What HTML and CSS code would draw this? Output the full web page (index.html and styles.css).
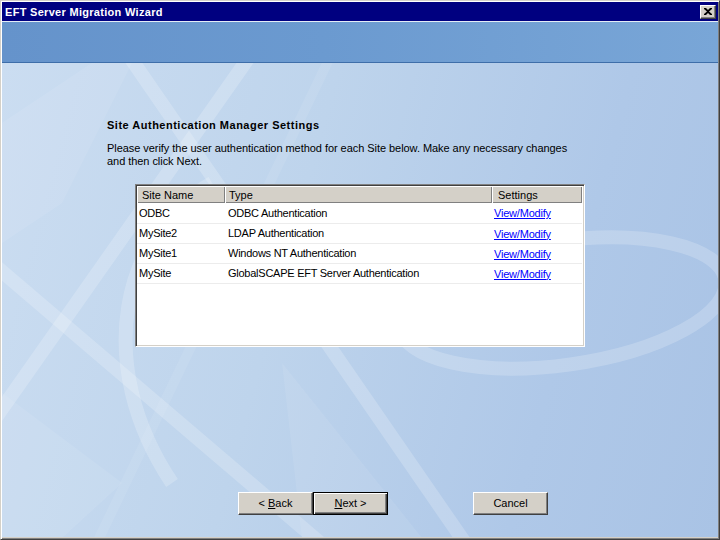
FILE: index.html
```html
<!DOCTYPE html>
<html>
<head>
<meta charset="utf-8">
<title>EFT Server Migration Wizard</title>
<link rel="stylesheet" href="styles.css">
</head>
<body>
<div class="window">
  <div class="titlebar">
    <span class="title">EFT Server Migration Wizard</span>
    <span class="close-btn">
      <svg width="8" height="7" viewBox="0 0 8 7"><path d="M0 0h2l2 2 2-2h2v1L5 3.5 8 6v1H6L4 5 2 7H0V6l3-2.5L0 1z" fill="#000"/></svg>
    </span>
  </div>
  <div class="banner"></div>
  <div class="body">
    <svg class="bg-art" width="716" height="475" viewBox="0 0 716 475">
      <g fill="#ffffff" fill-opacity="0.08">
        <polygon points="0,60 90,0 130,0 60,140 0,180"/>
        <polygon points="0,330 120,420 60,475 0,475"/>
        <polygon points="280,300 420,475 300,475"/>
      </g>
      <g fill="none" stroke="#ffffff" stroke-opacity="0.2" stroke-width="14">
        <line x1="125" y1="-10" x2="470" y2="490"/>
        <line x1="250" y1="-10" x2="-10" y2="360"/>
        <line x1="-10" y1="200" x2="330" y2="490"/>
        <path d="M210 120 C 120 170, 90 300, 170 420"/>
        <ellipse cx="560" cy="240" rx="165" ry="62" transform="rotate(-8 560 240)"/>
      </g>
      <g fill="none" stroke="#ffffff" stroke-opacity="0.08" stroke-width="10">
        <line x1="330" y1="-10" x2="90" y2="490"/>
      </g>
    </svg>
    <div class="content">
      <h1 class="heading">Site Authentication Manager Settings</h1>
      <p class="intro">Please verify the user authentication method for each Site below. Make any necessary changes<br>and then click Next.</p>
      <div class="listview">
        <table class="sites">
          <colgroup>
            <col class="c-name"><col class="c-type"><col class="c-set">
          </colgroup>
          <thead>
            <tr><th>Site Name</th><th>Type</th><th>Settings</th></tr>
          </thead>
          <tbody>
            <tr><td>ODBC</td><td>ODBC Authentication</td><td><a href="#">View/Modify</a></td></tr>
            <tr><td>MySite2</td><td>LDAP Authentication</td><td><a href="#">View/Modify</a></td></tr>
            <tr><td>MySite1</td><td>Windows NT Authentication</td><td><a href="#">View/Modify</a></td></tr>
            <tr><td>MySite</td><td>GlobalSCAPE EFT Server Authentication</td><td><a href="#">View/Modify</a></td></tr>
          </tbody>
        </table>
      </div>
    </div>
    <div class="buttons">
      <button class="btn">&lt; <u>B</u>ack</button>
      <button class="btn btn-default"><u>N</u>ext &gt;</button>
      <button class="btn btn-cancel">Cancel</button>
    </div>
  </div>
</div>
</body>
</html>
```
FILE: styles.css
```css
* { box-sizing: border-box; }
html, body { margin: 0; padding: 0; }
body {
  width: 720px;
  height: 540px;
  overflow: hidden;
  font-family: "Liberation Sans", Arial, sans-serif;
  font-size: 11px;
  color: #000;
}
.window {
  width: 720px;
  height: 540px;
  background: #d4d0c8;
  border: 1px solid;
  border-color: #d4d0c8 #404040 #404040 #d4d0c8;
  padding: 1px 1px 2px 1px;
  box-shadow: inset 1px 1px #ffffff, inset -1px -1px #808080;
  display: flex;
  flex-direction: column;
}
.titlebar {
  height: 19px;
  background: #000080;
  display: flex;
  align-items: center;
  justify-content: space-between;
  padding: 0 2px 0 2px;
}
.title {
  color: #fff;
  font-weight: bold;
  font-size: 11px;
  letter-spacing: 0.3px;
  padding-left: 1px;
}
.close-btn {
  width: 16px;
  height: 14px;
  background: #d4d0c8;
  border: 1px solid;
  border-color: #ffffff #404040 #404040 #ffffff;
  box-shadow: inset -1px -1px #808080;
  display: flex;
  align-items: center;
  justify-content: center;
  padding: 0 1px 1px 0;
}
.banner {
  height: 42px;
  border-top: 1px solid #e4ecf6;
  border-bottom: 1px solid #3e6ea9;
  background: linear-gradient(90deg, #6593cb 0%, #6b9ad0 45%, #79a6d7 100%);
}
.body {
  flex: 1;
  position: relative;
  display: flex;
  flex-direction: column;
  background: linear-gradient(105deg, #cbddf1 0%, #bed4ec 40%, #afc8e8 75%, #a9c3e5 100%);
  overflow: hidden;
}
.bg-art {
  position: absolute;
  left: 0;
  top: 0;
  z-index: 0;
}
.content {
  position: relative;
  z-index: 1;
  padding: 56px 0 0 105px;
}
.heading {
  margin: 0;
  font-size: 11px;
  font-weight: bold;
  line-height: 13px;
  letter-spacing: 0.5px;
}
.intro {
  margin: 10px 0 0 0;
  line-height: 13px;
  letter-spacing: -0.05px;
}
.listview {
  margin: 16px 0 0 28px;
  width: 450px;
  height: 163px;
  background: #fff;
  border: 1px solid;
  border-color: #808080 #ffffff #ffffff #808080;
  box-shadow: inset 1px 1px #404040, inset -1px -1px #d4d0c8;
  padding: 1px;
}
.sites {
  border-collapse: collapse;
  table-layout: fixed;
  width: 445px;
}
.c-name { width: 88px; }
.c-type { width: 267px; }
.c-set { width: 90px; }
.sites th {
  height: 17px;
  background: #d4d0c8;
  font-weight: normal;
  text-align: left;
  padding: 0 0 0 4px;
  box-shadow: inset 1px 1px #ffffff, inset -1px -1px #808080;
  line-height: 16px;
  white-space: nowrap;
}
.sites th:first-child { padding-left: 5px; }
.sites th:last-child { padding-left: 6px; }
.sites td {
  height: 20px;
  padding: 1px 0 0 3px;
  border-bottom: 1px solid #ececec;
  line-height: 17px;
  white-space: nowrap;
  overflow: hidden;
  letter-spacing: -0.25px;
}
.sites td:first-child { padding-left: 2px; }
.sites td:last-child { padding-left: 2px; padding-top: 2px; }
.sites a { color: #0000ff; text-decoration: underline; letter-spacing: -0.2px; }
.buttons {
  position: relative;
  z-index: 1;
  margin-top: auto;
  padding: 0 0 22px 236px;
  display: flex;
}
.btn {
  width: 75px;
  height: 23px;
  background: #d4d0c8;
  border: 1px solid;
  border-color: #ffffff #404040 #404040 #ffffff;
  box-shadow: inset -1px -1px #808080;
  font-family: "Liberation Sans", Arial, sans-serif;
  font-size: 11px;
  color: #000;
  padding: 0 0 1px 0;
  margin: 0;
}
.btn-default {
  border: 1px solid #000;
  box-shadow: inset 1px 1px #ffffff, inset -1px -1px #404040, inset -2px -2px #808080;
}
.btn-cancel { margin-left: 85px; }
```
